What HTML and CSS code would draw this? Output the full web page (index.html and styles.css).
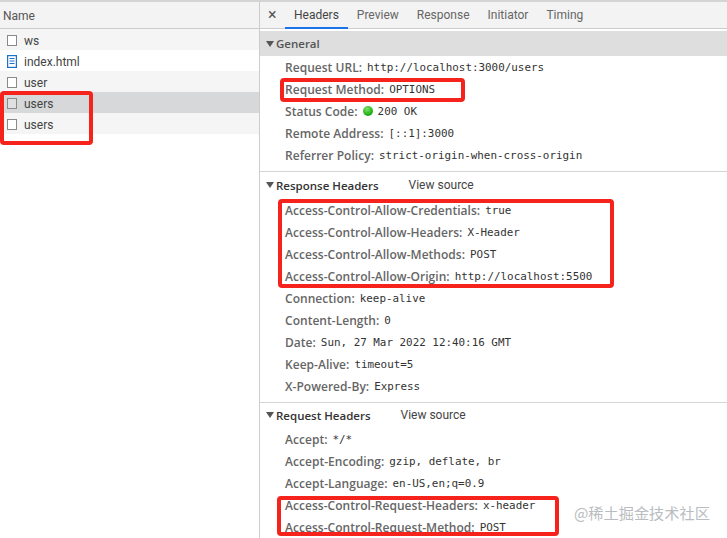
FILE: index.html
```html
<!DOCTYPE html>
<html lang="en">
<head>
<meta charset="utf-8">
<title>Network</title>
<link rel="stylesheet" href="styles.css">
</head>
<body>
<div class="app">
  <aside class="list">
    <div class="list-head">Name</div>
    <div class="row alt"><span class="file"></span>ws</div>
    <div class="row"><svg class="doc" width="10" height="13" viewBox="0 0 10 13"><rect x="0.6" y="0.6" width="8.800" height="11.800" fill="#fff" stroke="#1a73c8" stroke-width="1.200"/><path d="M2.500 3.500h5M2.500 6h5M2.500 8.500h5" stroke="#1a73c8" stroke-width="1"/></svg>index.html</div>
    <div class="row alt"><span class="file"></span>user</div>
    <div class="row selected"><span class="file"></span>users</div>
    <div class="row alt"><span class="file"></span>users</div>
  </aside>
  <main class="detail">
    <nav class="tabs">
      <span class="close">×</span>
      <span class="tab active">Headers</span>
      <span class="tab">Preview</span>
      <span class="tab">Response</span>
      <span class="tab">Initiator</span>
      <span class="tab">Timing</span>
    </nav>
    <section class="section first">
      <h2 class="title general"><span class="caret"></span>General</h2>
      <div class="kv"><b>Request URL:</b><code>http://localhost:3000/users</code></div>
      <div class="kv"><b>Request Method:</b><code>OPTIONS</code></div>
      <div class="kv"><b>Status Code:</b><span class="dot"></span><code>200 OK</code></div>
      <div class="kv"><b>Remote Address:</b><code>[::1]:3000</code></div>
      <div class="kv"><b>Referrer Policy:</b><code>strict-origin-when-cross-origin</code></div>
    </section>
    <section class="section">
      <h2 class="title"><span class="caret"></span>Response Headers<a class="source">View source</a></h2>
      <div class="kv"><b>Access-Control-Allow-Credentials:</b><code>true</code></div>
      <div class="kv"><b>Access-Control-Allow-Headers:</b><code>X-Header</code></div>
      <div class="kv"><b>Access-Control-Allow-Methods:</b><code>POST</code></div>
      <div class="kv"><b>Access-Control-Allow-Origin:</b><code>http://localhost:5500</code></div>
      <div class="kv"><b>Connection:</b><code>keep-alive</code></div>
      <div class="kv"><b>Content-Length:</b><code>0</code></div>
      <div class="kv"><b>Date:</b><code>Sun, 27 Mar 2022 12:40:16 GMT</code></div>
      <div class="kv"><b>Keep-Alive:</b><code>timeout=5</code></div>
      <div class="kv"><b>X-Powered-By:</b><code>Express</code></div>
    </section>
    <section class="section last">
      <h2 class="title"><span class="caret"></span>Request Headers<a class="source">View source</a></h2>
      <div class="kv"><b>Accept:</b><code>*/*</code></div>
      <div class="kv"><b>Accept-Encoding:</b><code>gzip, deflate, br</code></div>
      <div class="kv"><b>Accept-Language:</b><code>en-US,en;q=0.9</code></div>
      <div class="kv"><b>Access-Control-Request-Headers:</b><code>x-header</code></div>
      <div class="kv"><b>Access-Control-Request-Method:</b><code>POST</code></div>
    </section>
  </main>
  <div class="mark box-users"></div>
  <div class="mark box-method"></div>
  <div class="mark box-allow"></div>
  <div class="mark box-request"></div>
  <div class="watermark">@稀土掘金技术社区</div>
</div>
</body>
</html>
```
FILE: styles.css
```css
* { box-sizing: border-box; }
html, body { margin: 0; height: 100%; overflow: hidden; background: #fff; }
.app {
  position: relative;
  display: flex;
  width: 727px;
  height: 538px;
  overflow: hidden;
  padding-top: 2px;
  font: 12px "Open Sans", "Noto Sans", sans-serif;
  color: #444;
  background: #fff;
}
.app::before {
  content: "";
  position: absolute;
  left: 0; top: 0; right: 0;
  height: 2px;
  background: #d4d4d4;
}
.list { width: 260px; flex: none; border-right: 1px solid #ccc; font-family: Roboto, sans-serif; }
.list-head {
  height: 27px;
  padding-left: 3px;
  padding-top: 1px;
  line-height: 26px;
  background: #f3f3f3;
  border-bottom: 1px solid #ccc;
  color: #555;
}
.row {
  display: flex;
  align-items: center;
  gap: 7px;
  height: 21px;
  padding-left: 7px;
  padding-top: 2px;
  color: #444;
  background: #fff;
}
.row.alt { background: #f5f5f5; }
.row.selected { background: #d6d8da; }
.file {
  width: 10px; height: 11px;
  background: #fff;
  border: 1px solid #8a8a8a;
}
.selected .file { background: #e0e0e0; }
.doc { flex: none; }
.detail { flex: 1; min-width: 0; }
.tabs {
  display: flex;
  align-items: center;
  height: 27px;
  background: #f3f3f3;
  border-bottom: 1px solid #ccc;
  color: #666;
  font-family: Roboto, sans-serif;
}
.close { width: 25px; padding-left: 8px; font-size: 16px; line-height: 24px; color: #555; }
.tab { padding: 1px 9px 0; line-height: 26px; height: 28px; }
.tab.active { color: #444; border-bottom: 2px solid #1a73e8; }
.section { border-bottom: 1px solid #d4d4d4; padding-bottom: 5px; }
.section.first { padding-top: 2px; padding-bottom: 5px; }
.title {
  display: flex;
  align-items: center;
  height: 26px;
  margin: 0 0 1px;
  padding-left: 6px;
  font-size: 11.500px;
  font-weight: 600;
  color: #333;
}
.last .title { height: 24px; }
.title.general { height: 25px; margin-bottom: 0; background: #dedede; color: #555; }
.caret {
  width: 0; height: 0;
  margin-right: 2px;
  border-left: 4px solid transparent;
  border-right: 4px solid transparent;
  border-top: 6px solid #555;
}
.source { margin-left: 30px; font-family: Roboto, sans-serif; font-size: 12px; font-weight: 400; color: #444; }
.kv {
  display: flex;
  align-items: center;
  height: 22px;
  padding-left: 25px;
  white-space: nowrap;
}
.kv b { font-weight: 600; color: #666; margin-right: 5px; letter-spacing: 0.03px; }
.kv code { padding-top: 1px; font: 10.900px "DejaVu Sans Mono", "Liberation Mono", monospace; color: #333; }
.dot {
  width: 10px; height: 10px;
  margin-right: 5px;
  border-radius: 50%;
  background: radial-gradient(circle at 40% 30%, #7fe26a, #17a90f 70%);
}
.mark {
  position: absolute;
  border: 4px solid #f5231c;
  border-radius: 4px;
}
.box-users { left: 0; top: 91px; width: 93px; height: 54px; }
.box-method { left: 280px; top: 78px; width: 185px; height: 24px; }
.box-allow { left: 278px; top: 199px; width: 336px; height: 89px; }
.box-request { left: 277px; top: 496px; width: 282px; height: 40px; }
.watermark {
  position: absolute;
  left: 574px; top: 501px;
  font: 15.200px "Noto Sans CJK SC", "Noto Sans", sans-serif;
  color: #b9bcc0;
  white-space: nowrap;
}
```
